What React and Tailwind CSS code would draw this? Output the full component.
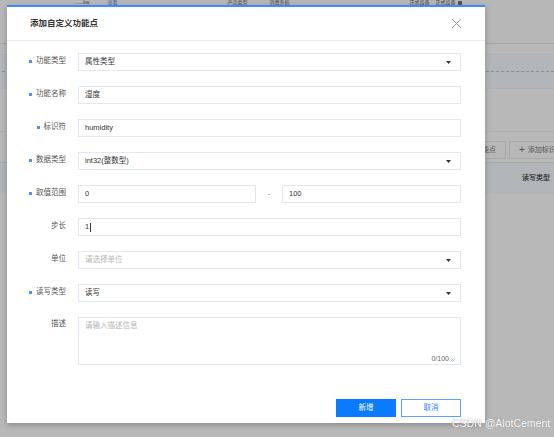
import { useState } from 'react';

const font = { fontFamily: '"Liberation Sans", "Noto Sans CJK SC", sans-serif' };

function Caret() {
  return (
    <svg width="5" height="3" viewBox="0 0 5 3" className="shrink-0 mr-[1px]">
      <path d="M0 0 L5 0 L2.5 3 Z" fill="#333" />
    </svg>
  );
}

function Label({ text, required }) {
  return (
    <div className="w-[59px] mr-[12px] shrink-0 flex items-center justify-end gap-[4px] text-[7.5px] text-[#555] leading-none -mt-[2px]">
      {required && <span className="w-[3px] h-[3px] bg-[#4a90ff]" />}
      <span>{text}</span>
    </div>
  );
}

function Box({ children, className = '' }) {
  return (
    <div className={`h-[18px] border border-[#e3e7ef] bg-white flex items-center pl-[6px] pr-[8px] text-[7.5px] text-[#333] ${className}`}>
      {children}
    </div>
  );
}

function Row({ label, required, children }) {
  return (
    <div className="flex items-center">
      <Label text={label} required={required} />
      {children}
    </div>
  );
}

function Backdrop() {
  return (
    <div className="w-full h-full flex flex-col text-[7px] text-[#555]">
      <div className="h-[44px] bg-[#b7b7b7] border-b border-[#a8a8a8]">
        <div className="flex items-start text-[5px] leading-none text-[#444] whitespace-nowrap">
          <span className="ml-[75px]">......kw</span>
          <span className="ml-[18px] text-[#3d5f9a]">查看</span>
          <span className="ml-[110px]">产品类型</span>
          <span className="ml-[22px]">消费系统</span>
          <span className="ml-[120px]">正式设备</span>
          <span className="ml-[6px]">正式设备</span>
          <span className="ml-[2px] mt-[1px] w-[4px] h-[4px] bg-[#555]" />
        </div>
      </div>
      <div className="h-[10px]" />
      <div className="h-[35px] bg-[#b2b5ba] border-y border-[#adb0b5] flex items-center">
        <div className="w-full border-t-[1.5px] border-dashed border-[#8e8e8e] ml-[2px]" />
      </div>
      <div className="h-[42px]" />
      <div className="border-t border-[#acacac]" />
      <div className="h-[9px]" />
      <div className="flex h-[18px] ml-[430px] gap-[3px]">
        <div className="w-[76px] border border-[#a9a9a9] flex items-center justify-end pr-[9px] shrink-0">能点</div>
        <div className="w-[80px] border border-[#a9a9a9] flex items-center pl-[9px] gap-[3px] shrink-0">
          <span className="text-[10px] leading-none">+</span>
          <span>添加标识</span>
        </div>
      </div>
      <div className="h-[3px]" />
      <div className="h-[32px] bg-[#b1b4b9] border-t border-[#aaa] flex items-center">
        <span className="ml-[522px] text-[7px] text-[#444] font-bold whitespace-nowrap">读写类型</span>
      </div>
      <div className="flex-1 bg-[#b8b8b8]" />
    </div>
  );
}

export default function App() {
  const [step] = useState('1');
  return (
    <div className="w-[554px] h-[437px] bg-[#b8b8b8] relative overflow-hidden" style={font}>
      <Backdrop />

      <div className="absolute left-[7px] top-[5px] w-[478px] h-[418px] bg-white border-t-2 border-[#3c8cff] shadow-[0_2px_6px_rgba(0,0,0,0.25)] flex flex-col">
        <div className="h-[34px] flex items-center justify-between pl-[23px] pr-[23px] border-b border-[#e9edf3]">
          <span className="text-[8.5px] font-bold text-[#333]">添加自定义功能点</span>
          <svg width="11" height="11" viewBox="0 0 11 11">
            <path d="M1 1 L10 10 M10 1 L1 10" stroke="#9a9a9a" strokeWidth="1" />
          </svg>
        </div>

        <div className="flex flex-col gap-[15px] pt-[12px] pr-[24px]">
          <Row label="功能类型" required>
            <Box className="flex-1 justify-between">
              <span>属性类型</span>
              <Caret />
            </Box>
          </Row>
          <Row label="功能名称" required>
            <Box className="flex-1">湿度</Box>
          </Row>
          <Row label="标识符" required>
            <Box className="flex-1">humidity</Box>
          </Row>
          <Row label="数据类型" required>
            <Box className="flex-1 justify-between">
              <span>int32(整数型)</span>
              <Caret />
            </Box>
          </Row>
          <Row label="取值范围" required>
            <div className="flex-1 flex items-center">
              <Box className="w-[178px]">0</Box>
              <span className="w-[26px] text-center text-[7px] text-[#666]">-</span>
              <Box className="flex-1">100</Box>
            </div>
          </Row>
          <Row label="步长">
            <Box className="flex-1">
              <span>{step}</span>
              <span className="w-px h-[9px] bg-[#333] ml-px" />
            </Box>
          </Row>
          <Row label="单位">
            <Box className="flex-1 justify-between">
              <span className="text-[#b5b5b5]">请选择单位</span>
              <Caret />
            </Box>
          </Row>
          <Row label="读写类型" required>
            <Box className="flex-1 justify-between">
              <span>读写</span>
              <Caret />
            </Box>
          </Row>
          <div className="flex items-start">
            <div className="mt-[5px] flex">
              <Label text="描述" />
            </div>
            <div className="flex-1 h-[48px] border border-[#e3e7ef] relative pl-[6px] pt-[4px] text-[7.5px] text-[#b5b5b5] leading-none">
              请输入描述信息
              <div className="absolute right-[5px] bottom-[2px] flex items-end gap-[1px] text-[7px] text-[#666]">
                <span>0/100</span>
                <svg width="5" height="5" viewBox="0 0 5 5">
                  <path d="M0.5 4.5 L4.5 0.5 M2.5 4.5 L4.5 2.5" stroke="#888" strokeWidth="0.6" />
                </svg>
              </div>
            </div>
          </div>
        </div>

        <div className="flex justify-end gap-[5px] pr-[24px] mt-[34px]">
          <button className="w-[60px] h-[18px] bg-[#0a7bff] text-white text-[7.5px]">新增</button>
          <button className="w-[60px] h-[18px] bg-white border border-[#5aa2ff] text-[#2a83ff] text-[7.5px]">取消</button>
        </div>
      </div>

      <div className="absolute left-[452px] top-[418px] text-[10.5px] leading-none whitespace-nowrap text-white [text-shadow:0_0_1px_#777]" style={{ fontFamily: '"Liberation Sans", sans-serif' }}>
        CSDN @AlotCement
      </div>
    </div>
  );
}
